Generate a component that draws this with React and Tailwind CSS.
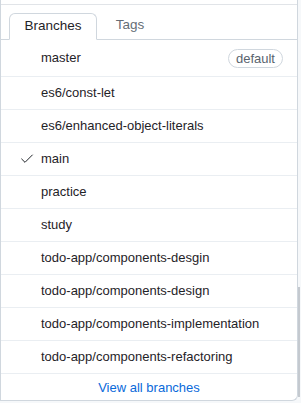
import { Check } from "lucide-react";

const branches = [
  { name: "master", isDefault: true },
  { name: "es6/const-let" },
  { name: "es6/enhanced-object-literals" },
  { name: "main", current: true },
  { name: "practice" },
  { name: "study" },
  { name: "todo-app/components-desgin" },
  { name: "todo-app/components-design" },
  { name: "todo-app/components-implementation" },
  { name: "todo-app/components-refactoring" },
];

export default function App() {
  return (
    <div
      className="flex h-[403px] w-[301px] overflow-hidden bg-[#f6f8fa]"
      style={{ fontFamily: "'Liberation Sans', Arial, sans-serif" }}
    >
      {/* popup panel */}
      <div className="flex h-[401px] w-[298px] flex-col border-r border-b border-l border-[#d0d7de] bg-white rounded-br-md">
        <div className="h-[5px] shrink-0 border-b border-[#e1e4e8]" />

        {/* tabs */}
        <div className="flex h-[35px] shrink-0 items-end border-b border-[#d0d7de] pl-2">
          <div className="-mb-px flex h-[27px] w-[88px] items-center justify-center rounded-t-md border border-b-white border-[#d0d7de] bg-white text-[13.5px] text-[#1f2328]">
            Branches
          </div>
          <div className="flex h-[27px] w-[66px] items-center justify-center text-[13.5px] text-[#656d76]">
            Tags
          </div>
        </div>

        {/* list */}
        <ul className="flex flex-col">
          {branches.map((b, i) => (
            <li
              key={b.name}
              className={
                i === 0
                  ? "relative flex h-[36px] items-center pl-10 pr-[14px] text-[13px] text-[#1f2328]"
                  : "relative flex h-[33px] items-center border-t border-[#eaeef2] pl-10 pr-[14px] text-[13px] text-[#1f2328]"
              }
            >
              {b.current && (
                <Check
                  size={16}
                  strokeWidth={1.5}
                  className="absolute left-[18px] text-[#1f2328]"
                />
              )}
              <span className="flex-1 whitespace-nowrap">{b.name}</span>
              {b.isDefault && (
                <span className="rounded-full border border-[#d0d7de] px-[7px] text-[13px] leading-[17px] text-[#59636e]">
                  default
                </span>
              )}
            </li>
          ))}
        </ul>

        {/* footer */}
        <div className="flex flex-1 items-center justify-center border-t border-[#eaeef2] pt-[2px]">
          <span className="text-[13px] text-[#0969da]">View all branches</span>
        </div>
      </div>

      {/* scrollbar */}
      <div className="flex w-[3px] flex-col justify-end pb-[6px]">
        <div className="h-[110px] w-[2px] bg-[#c4c9cf]" />
      </div>
    </div>
  );
}
